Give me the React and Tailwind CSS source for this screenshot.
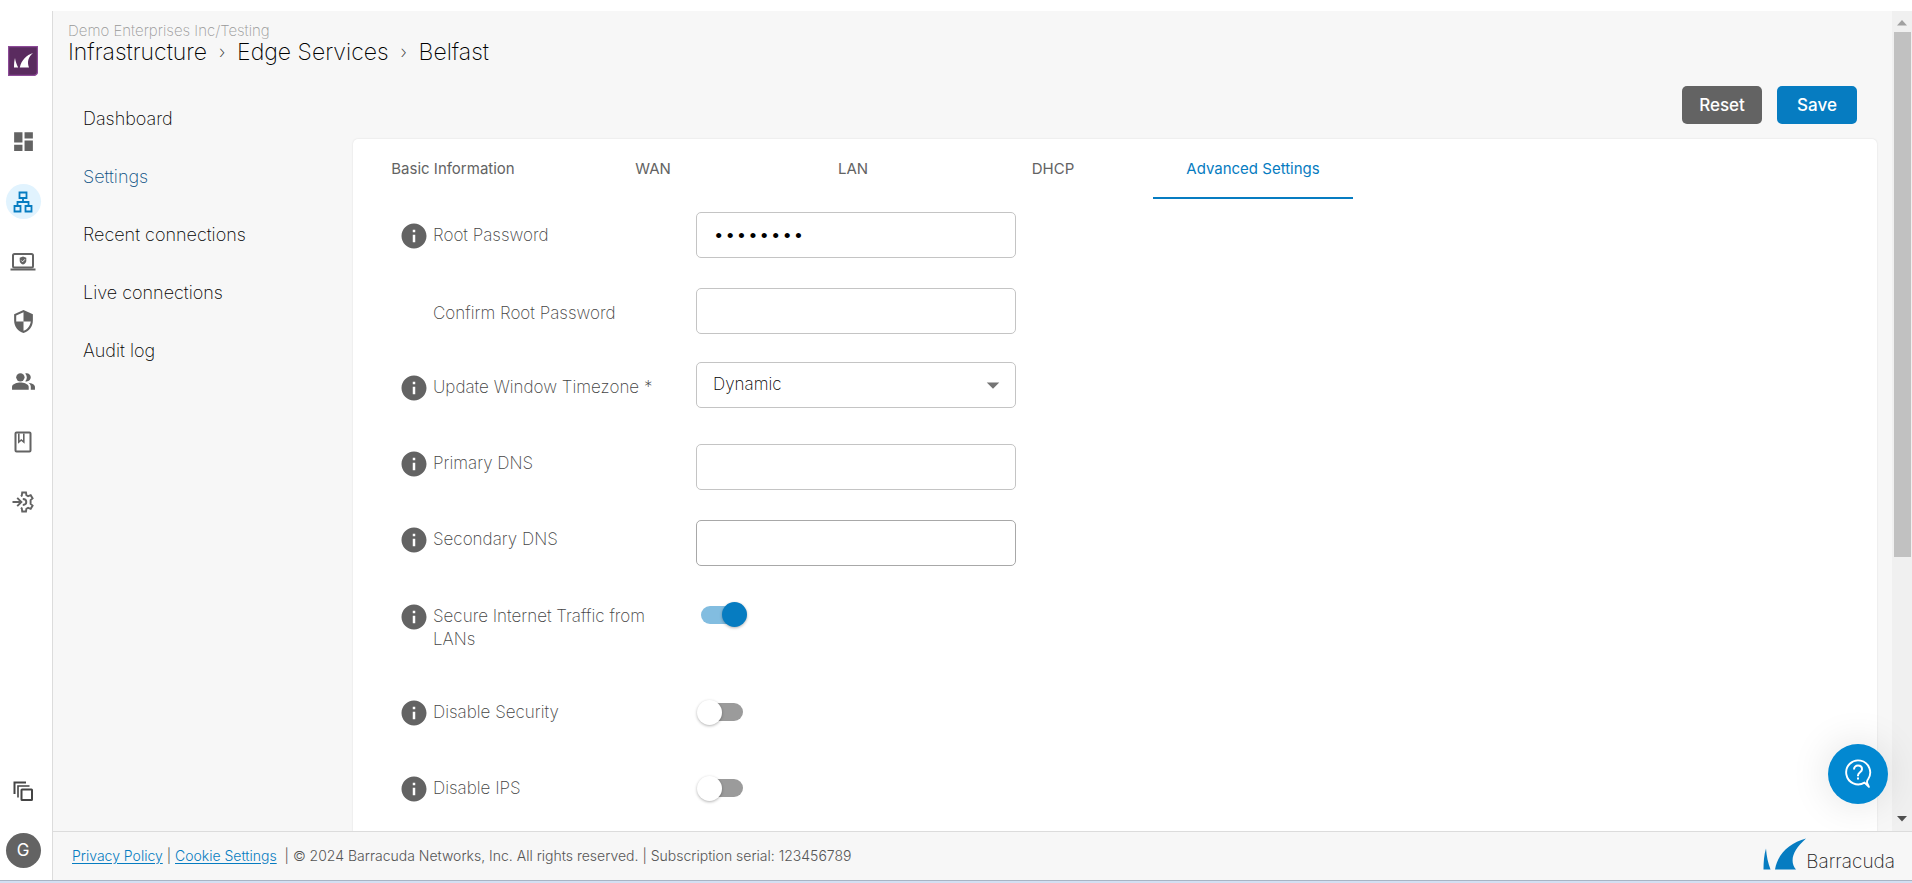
import { useState } from "react";
import { MdArrowDropDown, MdDashboard, MdInfo, MdPeopleAlt, MdSecurity } from "react-icons/md";

const NAV_ITEMS = ["Dashboard", "Settings", "Recent connections", "Live connections", "Audit log"];
const TABS = ["Basic Information", "WAN", "LAN", "DHCP", "Advanced Settings"];

function BrandMark() {
    return (
        <svg viewBox="0 0 30 30" className="h-[30px] w-[30px]" aria-label="Barracuda">
            <path d="M0.5 0.5h29v25a4 4 0 0 1-4 4h-25z" fill="#5a2b5f" stroke="#8d4a98" strokeWidth="1.4" />
            <path d="M7 12C6.200 15 6 18 6 21.500h4.200C8.400 18 7.400 15 7 12z" fill="#fff" />
            <path d="M25 7C18.500 9 13.500 14 11.800 21.500h9.200C18.800 15.500 20.500 11 25 7z" fill="#fff" />
        </svg>
    );
}

function NetworkIcon() {
    return (
        <svg viewBox="0 0 20 22" className="h-[22px] w-5" fill="none" stroke="currentColor" strokeWidth="1.800">
            <path d="M6.500 1.500h7v5.500h-7zM1.500 15h6v5.500h-6zM12.500 15h6v5.500h-6z" />
            <path d="M10 7v4M4.500 15v-4h11v4" />
        </svg>
    );
}

function LaptopIcon() {
    return (
        <svg viewBox="0 0 26 20" className="h-5 w-[26px]" fill="none">
            <rect x="3" y="2" width="20" height="13.500" rx="1.500" stroke="currentColor" strokeWidth="2" />
            <path d="M0.500 16.500h25v2h-25z" fill="currentColor" />
            <path d="M13 4.500l3.300 1.300v2.600c0 2-1.300 3.400-3.300 4.200-2-.8-3.300-2.200-3.300-4.200V5.800z" fill="currentColor" />
            <path d="M11.300 8.500l1.300 1.300 2.300-2.500" stroke="#fff" strokeWidth="0.900" />
        </svg>
    );
}

function BookIcon() {
    return (
        <svg viewBox="0 0 18 22" className="h-[22px] w-[18px]" fill="none">
            <rect x="1.500" y="1.500" width="15" height="19" rx="1" stroke="currentColor" strokeWidth="2" />
            <path d="M4.800 2.500v8.500l2.500-2 2.500 2v-8.500" stroke="currentColor" strokeWidth="1.600" />
        </svg>
    );
}

function GearArrowIcon() {
    return (
        <svg viewBox="0 0 22 22" className="h-[22px] w-[22px]" fill="none" stroke="currentColor" strokeWidth="1.900">
            <path d="M0.500 11h8M5.200 6.800L9.400 11l-4.200 4.200" />
            <path d="M8.800 5.200l1-.5.400-3.200h3.800l.4 2.700 1.700 1 2.600-1 1.900 3.200-2 1.700v3.800l2 1.700-1.900 3.200-2.600-1-1.700 1-.4 2.700h-3.800l-.4-3.200-1-.5" />
            <path d="M10.800 8c2.100.1 3.500 1.300 3.500 3s-1.400 2.900-3.500 3" />
        </svg>
    );
}

function CopiesIcon() {
    return (
        <svg viewBox="0 0 20 20" className="h-5 w-5 text-[#444]" fill="none" stroke="currentColor">
            <path d="M1.500 13V1.500H13" strokeWidth="2" />
            <path d="M5 16.500V5h11.500" strokeWidth="1.600" />
            <rect x="8.500" y="8.500" width="10.500" height="10.500" rx="0.500" strokeWidth="2" />
        </svg>
    );
}

function HelpIcon() {
    return (
        <svg viewBox="0 0 28 30" className="h-[30px] w-7" fill="none" stroke="#fff" strokeWidth="1.900">
            <path d="M20.500 23.600A12 12 0 1 1 24.200 20c-1.200 1.600-1.600 2.400-1 4.200l1.700 3.600z" strokeLinejoin="round" />
            <path d="M10 10.500c0-2.400 1.600-3.900 4-3.900s4 1.500 4 3.600c0 3-4 3-4 6.200v.8M14 18.600v2" strokeWidth="2" />
        </svg>
    );
}

function FooterLogo() {
    return (
        <div className="flex items-end pb-0.5">
            <svg viewBox="0 0 44 34" className="h-[34px] w-11" fill="#067cc1" aria-hidden="true">
                <path d="M4 10.500C2 17 1.500 24 1.500 31.500h7C6 25 4.500 18 4 10.500z" />
                <path d="M44 0.500C28 5 16 15 13 31.500h21C27 23 31 12 44 0.500z" />
            </svg>
            <span className="text-[19px] leading-5 font-extralight text-[#222]">Barracuda</span>
        </div>
    );
}

function Sidebar() {
    const icons = [
        { name: "Dashboard", icon: <MdDashboard size={25} /> },
        { name: "Infrastructure", icon: <NetworkIcon />, active: true },
        { name: "Devices", icon: <LaptopIcon /> },
        { name: "Security", icon: <MdSecurity size={25} /> },
        { name: "Users", icon: <MdPeopleAlt size={25} /> },
        { name: "Logs", icon: <BookIcon /> },
        { name: "Integrations", icon: <GearArrowIcon /> },
    ];

    return (
        <aside className="flex w-[53px] shrink-0 flex-col items-center border-r border-[#dcdcdc] bg-white pr-1.5 pt-[35px] pb-3 text-[#636363]">
            <BrandMark />
            <nav className="mt-12 flex flex-col gap-[25px]">
                {icons.map((item) => (
                    <button
                        key={item.name}
                        aria-label={item.name}
                        className={`flex h-[35px] w-[35px] items-center justify-center rounded-full ${item.active ? "bg-[#e1f3fe] text-[#067cc1]" : ""}`}
                    >
                        {item.icon}
                    </button>
                ))}
            </nav>
            <button aria-label="Switch workspace" className="mt-auto flex h-[35px] w-[35px] items-center justify-center">
                <CopiesIcon />
            </button>
            <button className="mt-[25px] flex h-[35px] w-[35px] items-center justify-center rounded-full bg-[#636363] text-[17px] text-white">
                G
            </button>
        </aside>
    );
}

function Row({ id, label, info = true, tall = false, children }) {
    return (
        <div className={`flex pl-12 ${tall ? "h-[97px] items-start pt-[25px]" : "h-[76px] items-center"}`}>
            <div className={`flex w-[295px] items-start ${tall ? "" : "pt-0.5"}`}>
                <span className="flex w-8 shrink-0 justify-start text-[#636363]">
                    {info && <MdInfo size={30} className="-ml-0.5" />}
                </span>
                <label htmlFor={id} className="w-[235px] pt-[3px] text-[17px] leading-[23px] font-extralight text-[#444]">
                    {label}
                </label>
            </div>
            {children}
        </div>
    );
}

function TextField({ id, type = "text", defaultValue = "", className = "border-[#c4c4c4]" }) {
    return (
        <input
            id={id}
            type={type}
            defaultValue={defaultValue}
            className={`h-[46px] w-80 rounded-[5px] border bg-white px-4 pt-1 font-['Liberation_Mono',monospace] text-[19px] text-black outline-none ${className}`}
        />
    );
}

function Switch({ id, checked, onChange }) {
    return (
        <span className="relative flex h-[25px] w-[51px] items-center justify-center">
            <input
                id={id}
                type="checkbox"
                role="switch"
                checked={checked}
                onChange={(e) => onChange(e.target.checked)}
                className="peer absolute inset-0 z-10 cursor-pointer opacity-0"
            />
            <span className="h-[18px] w-[42px] rounded-full bg-[#9b9b9b] peer-checked:bg-[#82bde0]" />
            <span className="absolute left-px h-[25px] w-[25px] rounded-full bg-white shadow-[0_1px_3px_rgba(0,0,0,0.3)] peer-checked:left-[26px] peer-checked:bg-[#067cc1]" />
        </span>
    );
}

function AdvancedSettings() {
    const [secureTraffic, setSecureTraffic] = useState(true);
    const [disableSecurity, setDisableSecurity] = useState(false);
    const [disableIps, setDisableIps] = useState(false);

    return (
        <form className="-mt-0.5">
            <Row id="root-password" label="Root Password">
                <TextField id="root-password" type="password" defaultValue="password" />
            </Row>
            <Row id="confirm-password" label="Confirm Root Password" info={false}>
                <TextField id="confirm-password" type="password" />
            </Row>
            <Row id="timezone" label="Update Window Timezone *">
                <div className="relative mb-1 w-80">
                    <select
                        id="timezone"
                        className="h-[46px] w-full appearance-none rounded-[5px] border border-[#c4c4c4] bg-white px-4 text-[17px] font-extralight text-black outline-none"
                    >
                        <option>Dynamic</option>
                    </select>
                    <MdArrowDropDown size={30} className="pointer-events-none absolute right-2 top-2 text-[#757575]" />
                </div>
            </Row>
            <Row id="primary-dns" label="Primary DNS">
                <div className="pt-2">
                    <TextField id="primary-dns" />
                </div>
            </Row>
            <Row id="secondary-dns" label="Secondary DNS">
                <div className="pt-2">
                    <TextField id="secondary-dns" className="border-[#a8a8a8]" />
                </div>
            </Row>
            <Row id="secure-traffic" label="Secure Internet Traffic from LANs" tall>
                <Switch id="secure-traffic" checked={secureTraffic} onChange={setSecureTraffic} />
            </Row>
            <Row id="disable-security" label="Disable Security">
                <Switch id="disable-security" checked={disableSecurity} onChange={setDisableSecurity} />
            </Row>
            <Row id="disable-ips" label="Disable IPS">
                <Switch id="disable-ips" checked={disableIps} onChange={setDisableIps} />
            </Row>
        </form>
    );
}

function ScrollBar() {
    return (
        <div className="flex w-5 shrink-0 flex-col items-center bg-[#f0f0f0]" aria-hidden="true">
            <svg viewBox="0 0 10 6" className="mt-[9px] h-[6px] w-[10px] fill-[#a0a0a0]"><path d="M5 0l5 5.500H0z" /></svg>
            <div className="mt-[6px] h-[64%] w-[17px] bg-[#c1c1c1]" />
            <svg viewBox="0 0 10 6" className="mt-auto mb-[9px] h-[6px] w-[10px] fill-[#505050]"><path d="M5 5.500L0 0h10z" /></svg>
        </div>
    );
}

export default function App() {
    const [tab, setTab] = useState("Advanced Settings");

    return (
        <div className="flex h-screen flex-col overflow-hidden bg-white pt-[11px] font-['Inter','Open_Sans',sans-serif]">
            <div className="flex min-h-0 flex-1">
                <Sidebar />
                <div className="flex min-w-0 flex-1 flex-col bg-[#f7f7f7]">
                    <div className="flex min-h-0 flex-1">
                        <main className="flex min-w-0 flex-1 flex-col overflow-hidden">
                            <header className="pl-[15px] pt-[10px]">
                                <p className="text-[15px] leading-[19px] font-extralight text-[#999]">Demo Enterprises Inc/Testing</p>
                                <nav className="flex items-center text-[23px] leading-6 font-extralight text-black">
                                    <a href="#infrastructure">Infrastructure</a>
                                    <span className="w-[30px] text-center text-[18px] text-[#333]">›</span>
                                    <a href="#edge-services">Edge Services</a>
                                    <span className="w-[30px] text-center text-[18px] text-[#333]">›</span>
                                    <span>Belfast</span>
                                </nav>
                            </header>
                            <div className="flex min-h-0 flex-1 items-start pt-[22px]">
                                <nav className="flex w-[300px] shrink-0 flex-col pt-[7px] pl-[30px] text-[18px] font-extralight text-black">
                                    {NAV_ITEMS.map((item) => (
                                        <a
                                            key={item}
                                            href="#"
                                            className={`flex h-[58px] items-center pb-2 ${item === "Settings" ? "text-[#0b5084]" : ""}`}
                                        >
                                            {item}
                                        </a>
                                    ))}
                                </nav>
                                <section className="mr-[15px] min-w-0 flex-1">
                                    <div className="flex justify-end gap-[15px] pr-5 pb-[15px] text-[17px] font-medium text-white">
                                        <button className="h-[38px] w-20 rounded-[5px] bg-[#636363] pt-0.5">Reset</button>
                                        <button className="h-[38px] w-20 rounded-[5px] bg-[#067cc1] pt-0.5">Save</button>
                                    </div>
                                    <div className="rounded-t-[5px] bg-white pb-24 shadow-[0_0_2px_rgba(0,0,0,0.12)]">
                                        <div role="tablist" className="flex">
                                            {TABS.map((name) => (
                                                <button
                                                    key={name}
                                                    type="button"
                                                    role="tab"
                                                    aria-selected={tab === name}
                                                    onClick={() => setTab(name)}
                                                    className={`h-[60px] w-[200px] border-b-2 pt-0.5 text-[15px] ${tab === name ? "border-[#067cc1] text-[#067cc1]" : "border-transparent text-[#636363]"}`}
                                                >
                                                    {name}
                                                </button>
                                            ))}
                                        </div>
                                        <AdvancedSettings />
                                    </div>
                                </section>
                            </div>
                        </main>
                        <ScrollBar />
                    </div>
                    <footer className="flex h-[49px] shrink-0 items-center justify-between border-t border-[#dcdcdc] pl-[19px] pr-[17px] text-[14px] font-light text-[#555]">
                        <p className="pb-0.5 whitespace-pre">
                            <a href="#privacy" className="text-[#067cc1] underline underline-offset-2">Privacy Policy</a>
                            {" | "}
                            <a href="#cookies" className="text-[#067cc1] underline underline-offset-2">Cookie Settings</a>
                            {"  | © 2024 Barracuda Networks, Inc. All rights reserved. | Subscription serial: 123456789"}
                        </p>
                        <FooterLogo />
                    </footer>
                </div>
            </div>
            <div className="h-[3px] shrink-0 border-t border-[#a9b4c4] bg-[#d3dff2]" />
            <button
                aria-label="Help"
                className="fixed right-6 bottom-[79px] flex h-[60px] w-[60px] items-center justify-center rounded-full bg-[#0288d1] shadow-[0_0_40px_rgba(0,0,0,0.12)]"
            >
                <HelpIcon />
            </button>
        </div>
    );
}
